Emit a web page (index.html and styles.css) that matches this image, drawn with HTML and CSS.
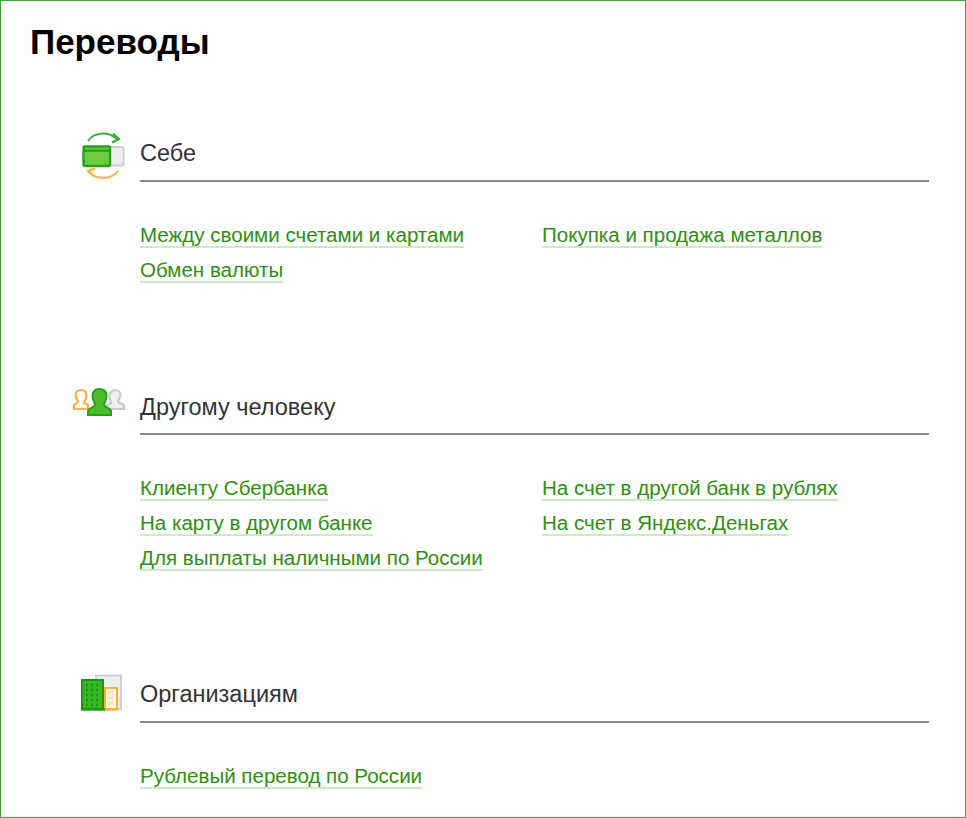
FILE: index.html
```html
<!DOCTYPE html>
<html lang="ru">
<head>
    <meta charset="UTF-8">
    <meta name="viewport" content="width=device-width, initial-scale=1.0">
    <link rel="stylesheet" href="styles.css">
    <title>Переводы</title>
</head>
<body>
    <div class="frame">
        <h1 class="page-title">Переводы</h1>

        <section class="group group-self">
            <div class="group-head">
                <svg class="group-icon" viewBox="72 130 56 52">
                    <path d="M88 141 C94 132 108 131 117 139" fill="none" stroke="#3aa935" stroke-width="2"/>
                    <path d="M113 133.5 L119 139 L112 142.5" fill="none" stroke="#3aa935" stroke-width="2"/>
                    <rect x="108" y="147" width="15.5" height="18.5" rx="2" fill="#eeeeee" stroke="#cfcfcf" stroke-width="2"/>
                    <rect x="83.5" y="146.5" width="26.5" height="19.5" rx="1.5" fill="#6ccb3f" stroke="#23a31c" stroke-width="2.4"/>
                    <rect x="83" y="149.5" width="27" height="2.4" fill="#23a31c"/>
                    <path d="M118 171 C111 180 97 180 89 172" fill="none" stroke="#f9ae3d" stroke-width="2"/>
                    <path d="M94 176.5 L88 171 L95 168.5" fill="none" stroke="#f9ae3d" stroke-width="2"/>
                </svg>
                <h2 class="group-title">Себе</h2>
            </div>
            <div class="links">
                <div class="link-row"><a class="link" href="#">Между своими счетами и картами</a></div>
                <div class="link-row"><a class="link" href="#">Покупка и продажа металлов</a></div>
                <div class="link-row"><a class="link" href="#">Обмен валюты</a></div>
            </div>
        </section>

        <section class="group group-person">
            <div class="group-head">
                <svg class="group-icon" viewBox="72 382 56 52">
                    <path d="M81 389 C85 389 86.5 392 86.5 395 C86.5 398 84 400 84 402 L88 404 L88 408 L74 408 L74 404 C76 402 78 402 78 400 C76.5 398 75.5 397 75.5 394 C75.5 391 78 389 81 389 Z" fill="#fff" stroke="#f9ae3d" stroke-width="2.2"/>
                    <path d="M115 389 C118 389 120.5 391 120.5 394 C120.5 397 119 398 118 400 C118 402 121 402 124 404 L124 408 L107 408 L107 404 L111 402 C111 400 109.5 398 109.5 395 C109.5 392 112 389 115 389 Z" fill="#f0f0f0" stroke="#c9c9c9" stroke-width="2.2"/>
                    <path d="M99 388 C104 388 106.5 391 106.5 395 C106.5 399 104 402 104 404 C105 407 111 407 111 410 L111 414 L88 414 L88 410 C88 407 94 407 95 404 C95 402 92.5 399 92.5 395 C92.5 391 95 388 99 388 Z" fill="#4dbb2e" stroke="#23a31c" stroke-width="2"/>
                </svg>
                <h2 class="group-title">Другому человеку</h2>
            </div>
            <div class="links">
                <div class="link-row"><a class="link" href="#">Клиенту Сбербанка</a></div>
                <div class="link-row"><a class="link" href="#">На счет в другой банк в рублях</a></div>
                <div class="link-row"><a class="link" href="#">На карту в другом банке</a></div>
                <div class="link-row"><a class="link" href="#">На счет в Яндекс.Деньгах</a></div>
                <div class="link-row"><a class="link" href="#">Для выплаты наличными по России</a></div>
            </div>
        </section>

        <section class="group group-org">
            <div class="group-head">
                <svg class="group-icon" viewBox="72 670 56 52">
                    <path d="M96 680 L96 674.5 L121 674.5 L121 708 L100 708 Z" fill="#eeeeee" stroke="#cfcfcf" stroke-width="2"/>
                    <rect x="105" y="687" width="12" height="21" fill="#fff6e6" stroke="#f9ae3d" stroke-width="2"/>
                    <path d="M108 692 h6 M108 697 h6 M108 702 h6" stroke="#f6dcae" stroke-width="3" stroke-dasharray="2 1"/>
                    <rect x="82" y="679" width="21" height="29" fill="#3db524" stroke="#159a12" stroke-width="2"/>
                    <path d="M81 708.5 h24" stroke="#159a12" stroke-width="2.4"/>
                    <path d="M105 708.5 h12" stroke="#f9ae3d" stroke-width="2.4"/>
                    <path d="M86 684 h14 M86 689 h14 M86 694 h14 M86 699 h14 M86 704 h14" stroke="#169c13" stroke-width="2.4" stroke-dasharray="2 3"/>
                </svg>
                <h2 class="group-title">Организациям</h2>
            </div>
            <div class="links">
                <div class="link-row"><a class="link" href="#">Рублевый перевод по России</a></div>
            </div>
        </section>
    </div>
</body>
</html>
```
FILE: styles.css
```css
* {
    box-sizing: border-box;
}

body {
    margin: 0;
    font-family: "Liberation Sans", Arial, sans-serif;
    background-color: #fff;
}

.frame {
    height: 818px;
    padding: 21px 36px 0 29px;
    border: 1px solid #3aa63a;
    overflow: hidden;
}

.page-title {
    margin: 0;
    font-size: 35px;
    line-height: 40px;
    font-weight: bold;
    color: #000;
}

.group {
    margin-left: 40px;
}

.group-self {
    margin-top: 68px;
}

.group-person {
    margin-top: 98px;
}

.group-org {
    margin-top: 98px;
}

.group-head {
    display: flex;
    align-items: flex-start;
}

.group-icon {
    flex: none;
    width: 56px;
    height: 52px;
    margin: 0 12px 0 2px;
}

.group-title {
    flex: 1;
    height: 52px;
    margin: 0;
    padding-top: 10px;
    font-size: 23.5px;
    line-height: 26px;
    font-weight: normal;
    color: #333;
    border-bottom: 2px solid #8a8a8a;
}

.group-person .group-title {
    padding-top: 11px;
}

.links {
    display: grid;
    grid-template-columns: 402px 1fr;
    row-gap: 8px;
    margin-top: 41px;
    margin-left: 70px;
}

.link-row {
    height: 27px;
}

.link {
    font-size: 20.55px;
    line-height: 24px;
    color: #2f8f12;
    text-decoration: none;
    border-bottom: 2px solid #cdeac6;
}
```
